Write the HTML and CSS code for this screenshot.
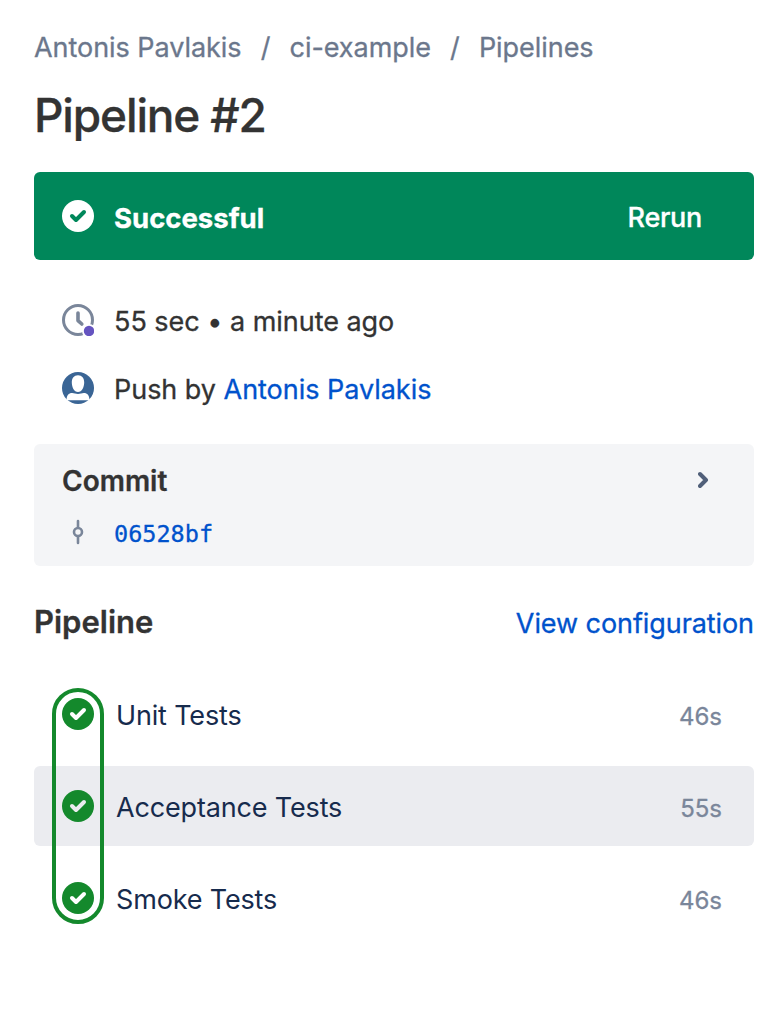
FILE: index.html
```html
<!DOCTYPE html>
<html lang="en">
<head>
<meta charset="utf-8">
<title>Pipeline #2</title>
<link rel="stylesheet" href="styles.css">
</head>
<body>
<svg class="defs" width="0" height="0" aria-hidden="true">
  <symbol id="check" viewBox="0 0 32 32">
    <circle cx="16" cy="16" r="16" fill="currentColor"/>
    <path class="tick" d="M10 16l4 4 8-8"/>
  </symbol>
</svg>
<main class="page">
  <nav class="crumbs">
    <a class="crumb">Antonis Pavlakis</a><span class="slash">/</span><a class="crumb">ci-example</a><span class="slash">/</span><a class="crumb">Pipelines</a>
  </nav>
  <h1 class="title">Pipeline #2</h1>

  <section class="banner">
    <svg class="icon"><use href="#check"/></svg>
    <strong class="banner-status">Successful</strong>
    <a class="banner-action">Rerun</a>
  </section>

  <section class="meta">
    <div class="meta-row">
      <svg class="icon" viewBox="0 0 32 32" fill="none">
        <circle cx="16" cy="16" r="14.500" stroke="#7a869a" stroke-width="3"/>
        <path d="M16 9v7.600l3.800 3.400" stroke="#7a869a" stroke-width="3.600" stroke-linecap="round" stroke-linejoin="round"/>
        <circle cx="27" cy="27" r="7" fill="#fff"/>
        <circle cx="27" cy="27" r="5.200" fill="#6554c0"/>
      </svg>
      <span class="meta-text">55 sec • a minute ago</span>
    </div>
    <div class="meta-row">
      <svg class="icon" viewBox="0 0 32 32">
        <circle cx="16" cy="16" r="16" fill="#3a6595"/>
        <path fill="#fff" d="M16 3.200c4 0 6.200 3 6.200 7.200S20 20 16 20s-6.200-5.400-6.200-9.600S12 3.200 16 3.200zM4.500 28.200c.2-4.800 2-7.200 5.700-7.200 2 0 3.400 1 5.800 1s3.800-1 5.800-1c3.700 0 5.500 2.400 5.700 7.200z"/>
      </svg>
      <span class="meta-text">Push by <a class="link">Antonis Pavlakis</a></span>
    </div>
  </section>

  <section class="commit">
    <header class="commit-head">
      <h2 class="commit-title">Commit</h2>
      <svg class="chevron" viewBox="0 0 12 18"><path d="M2 3l6 6-6 6"/></svg>
    </header>
    <div class="commit-row">
      <svg class="icon node" viewBox="0 0 32 32"><circle cx="16" cy="16" r="4"/><path d="M16 5v6M16 21v6"/></svg>
      <a class="link hash">06528bf</a>
    </div>
  </section>

  <header class="steps-head">
    <h2 class="steps-title">Pipeline</h2>
    <a class="link config">View configuration</a>
  </header>

  <section class="steps">
    <div class="step"><svg class="icon"><use href="#check"/></svg><span class="step-name">Unit Tests</span><span class="step-time">46s</span></div>
    <div class="step step-active"><svg class="icon"><use href="#check"/></svg><span class="step-name">Acceptance Tests</span><span class="step-time">55s</span></div>
    <div class="step"><svg class="icon"><use href="#check"/></svg><span class="step-name">Smoke Tests</span><span class="step-time">46s</span></div>
    <div class="track"></div>
  </section>
</main>
</body>
</html>
```
FILE: styles.css
```css
* { box-sizing: border-box; }
body { margin: 0; background: #fff; color: #333; font: 27px/40px Inter, sans-serif; -webkit-text-stroke: 0.3px currentColor; }
.defs { position: absolute; }
.page { padding: 28px 22px 0 34px; }
h1, h2 { margin: 0; }
.icon { width: 32px; height: 32px; flex: none; display: block; }
.tick { fill: none; stroke: var(--tick, #fff); stroke-width: 4; stroke-linecap: round; stroke-linejoin: round; }
.link { color: #0052cc; }

.crumbs { display: flex; color: #6b778c; letter-spacing: -0.05px; }
.slash { width: 48px; text-align: center; }

.title { margin-top: 18px; font-size: 46px; line-height: 58px; font-weight: 500; letter-spacing: -1.150px; }

.banner { display: flex; align-items: center; height: 88px; margin-top: 28px; padding: 0 52px 0 28px; border-radius: 6px; background: #00875a; color: #fff; --tick: #00875a; }
.banner-status { flex: 1; margin-left: 20px; padding-top: 3px; font-size: 27.500px; font-weight: 700; }
.banner-action { padding-top: 3px; font-weight: 500; letter-spacing: -0.300px; }

.meta { display: grid; gap: 28px; padding: 40px 28px; }
.meta-row { display: flex; align-items: center; gap: 20px; height: 40px; }
.meta-text { padding-top: 3px; letter-spacing: -0.030px; }

.commit { height: 122px; margin-top: -4px; padding: 16px 44px 0 28px; border-radius: 6px; background: #f4f5f7; }
.commit-head { display: flex; align-items: center; justify-content: space-between; height: 40px; }
.commit-title { padding-top: 2px; font-size: 28px; line-height: 40px; font-weight: 600; }
.chevron { width: 12px; height: 18px; fill: none; stroke: #505f79; stroke-width: 4; stroke-linecap: round; stroke-linejoin: round; }
.commit-row { display: flex; align-items: center; gap: 20px; height: 40px; margin-top: 12px; }
.node { fill: none; stroke: #7a869a; stroke-width: 2.600; stroke-linecap: round; }
.hash { padding-top: 4px; font: 23.500px/40px "DejaVu Sans Mono", monospace; }

.steps-head { display: flex; justify-content: space-between; align-items: center; height: 40px; margin-top: 36px; }
.steps-title { font-size: 31px; line-height: 40px; font-weight: 600; }
.config { padding-top: 3px; letter-spacing: -0.080px; }

.steps { position: relative; display: grid; gap: 12px; margin-top: 32px; }
.step { display: flex; align-items: center; height: 80px; padding: 0 32px 0 28px; border-radius: 6px; color: #14892c; }
.step-active { background: #ebecf0; --tick: #ebecf0; }
.step-name { flex: 1; margin-left: 22px; padding-top: 3px; color: #172b4d; letter-spacing: -0.160px; -webkit-text-stroke-width: 0; }
.step-time { padding-top: 5px; font-size: 24px; color: #7a869a; }
.track { position: absolute; left: 18px; top: 14px; width: 52px; height: 236px; border: 4px solid #14892c; border-radius: 26px; }
```
